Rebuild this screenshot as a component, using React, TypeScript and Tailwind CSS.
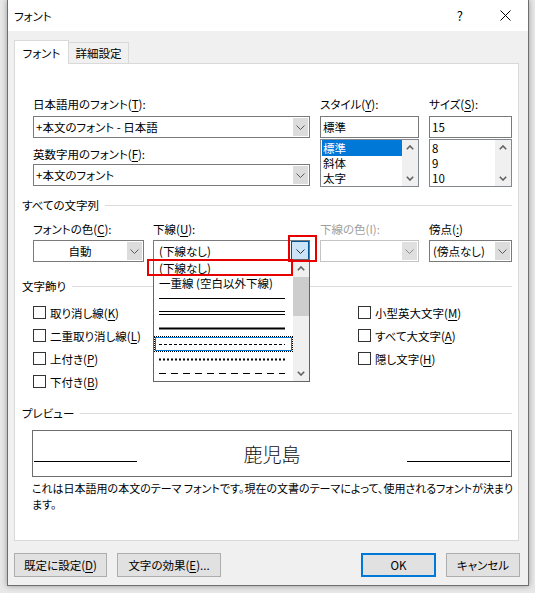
import React from "react";

function Chev({ color = "#5a5a5a" }: { color?: string }) {
  return (
    <svg width="9" height="5" viewBox="0 0 9 5">
      <path d="M0.5 0.5 L4.5 4.5 L8.5 0.5" fill="none" stroke={color} strokeWidth="1" />
    </svg>
  );
}

function Up() {
  return (
    <svg width="8" height="5" viewBox="0 0 8 5">
      <path d="M0.8 4.2 L4 1 L7.2 4.2" fill="none" stroke="#606060" strokeWidth="1.6" />
    </svg>
  );
}
function Down() {
  return (
    <svg width="8" height="5" viewBox="0 0 8 5">
      <path d="M0.8 0.8 L4 4 L7.2 0.8" fill="none" stroke="#606060" strokeWidth="1.6" />
    </svg>
  );
}

function U({ c }: { c: string }) {
  return <span className="underline underline-offset-[2px]">{c}</span>;
}

function Check({ children }: { children: React.ReactNode }) {
  return (
    <div className="flex items-center h-[23px]">
      <div className="w-[13px] h-[13px] border border-[#333333] bg-white" />
      <span className="ml-[4px] leading-[16px]">{children}</span>
    </div>
  );
}

function Section({ label }: { label: string }) {
  return (
    <div className="flex items-center h-[16px]">
      <span className="leading-[16px]">{label}</span>
      <div className="flex-1 h-px bg-[#dcdcdc] ml-[6px]" />
    </div>
  );
}

export default function App() {
  return (
    <div className="w-[535px] h-[593px] overflow-hidden bg-[#e8e8e8] font-['Noto_Sans_CJK_JP','Noto_Sans',sans-serif] text-[11.5px] text-black [font-feature-settings:'palt']">
      <div className="ml-[7px] w-[522px] h-[586px] bg-[#f0f0f0] border-x border-b border-[#6e6e6e] shadow-[0_0_6px_rgba(0,0,0,0.35)] flex flex-col">
        {/* title bar */}
        <div className="h-[31px] bg-white flex items-center shrink-0">
          <span className="ml-[6px] leading-[16px]">フォント</span>
          <span className="ml-auto leading-[16px] text-[13px]">?</span>
          <svg className="ml-[37px] mr-[17px]" width="11" height="11" viewBox="0 0 11 11">
            <path d="M0.5 0.5 L10.5 10.5 M10.5 0.5 L0.5 10.5" stroke="#000" strokeWidth="1" />
          </svg>
        </div>
        {/* tabs */}
        <div className="h-[32px] flex items-end pl-[6px] shrink-0">
          <div className="relative z-10 -mb-px h-[24px] w-[55px] bg-white border-x border-t border-[#d9d9d9] flex items-center justify-center leading-[16px]">
            フォント
          </div>
          <div className="h-[21px] w-[60px] border-r border-t border-[#d9d9d9] flex items-center justify-center leading-[16px]">
            詳細設定
          </div>
        </div>
        {/* panel */}
        <div className="ml-[6px] w-[505px] h-[478px] bg-white border border-[#d9d9d9] shrink-0 pl-[7px] pr-[6px] pt-[32px]">
          {/* row 1 */}
          <div className="flex ml-[11px]">
            <div className="w-[277px]">
              <div className="h-[16px] leading-[16px]">日本語用のフォント(<U c="T" />):</div>
              <div className="mt-[4px] h-[22px] border border-[#7a7a7a] flex">
                <div className="flex-1 pl-[2px] leading-[20px]">+本文のフォント - 日本語</div>
                <div className="w-[15px] m-px bg-[#dcdcdc] flex items-center justify-center"><Chev /></div>
              </div>
              <div className="mt-[8px] h-[16px] leading-[16px]">英数字用のフォント(<U c="F" />):</div>
              <div className="mt-[2px] h-[22px] border border-[#7a7a7a] flex">
                <div className="flex-1 pl-[2px] leading-[20px]">+本文のフォント</div>
                <div className="w-[15px] m-px bg-[#dcdcdc] flex items-center justify-center"><Chev /></div>
              </div>
            </div>
            <div className="w-[99px] ml-[10px]">
              <div className="h-[16px] leading-[16px]">スタイル(<U c="Y" />):</div>
              <div className="mt-[4px] h-[22px] border border-[#7a7a7a] pl-[2px] leading-[20px]">標準</div>
              <div className="mt-px h-[48px] border border-[#828790] flex">
                <div className="flex-1 pl-px">
                  <div className="h-[16px] leading-[16px] bg-[#0078d7] text-white pl-px">標準</div>
                  <div className="h-[15px] leading-[15px] pl-px">斜体</div>
                  <div className="h-[15px] leading-[15px] pl-px">太字</div>
                </div>
                <div className="w-[16px] bg-[#f0f0f0] flex flex-col items-center justify-between py-[5px]">
                  <Up />
                  <Down />
                </div>
              </div>
            </div>
            <div className="w-[83px] ml-[10px]">
              <div className="h-[16px] leading-[16px]">サイズ(<U c="S" />):</div>
              <div className="mt-[4px] h-[22px] border border-[#7a7a7a] pl-[2px] leading-[20px]">15</div>
              <div className="mt-px h-[48px] border border-[#828790] flex">
                <div className="flex-1 pl-px">
                  <div className="h-[16px] leading-[16px] pl-px">8</div>
                  <div className="h-[15px] leading-[15px] pl-px">9</div>
                  <div className="h-[15px] leading-[15px] pl-px">10</div>
                </div>
                <div className="w-[16px] bg-[#f0f0f0] flex flex-col items-center justify-between py-[5px]">
                  <Up />
                  <Down />
                </div>
              </div>
            </div>
          </div>

          {/* section all text */}
          <div className="mt-[10px]">
            <Section label="すべての文字列" />
          </div>
          <div className="flex ml-[11px] mt-[8px]">
            <div className="w-[111px]">
              <div className="h-[16px] leading-[16px]">フォントの色(<U c="C" />):</div>
              <div className="mt-[3px] h-[22px] border border-[#7a7a7a] flex">
                <div className="flex-1 text-center leading-[20px]">自動</div>
                <div className="w-[15px] m-px bg-[#dcdcdc] flex items-center justify-center"><Chev /></div>
              </div>
            </div>
            <div className="w-[157px] ml-[9px]">
              <div className="h-[16px] leading-[16px]">下線(<U c="U" />):</div>
              <div className="relative mt-[3px] h-[22px] border border-[#7a7a7a] flex">
                <div className="flex-1 pl-[5px] leading-[20px]">(下線なし)</div>
                <div className="w-[18px] bg-[#cce4f7] border border-[#005499] flex items-center justify-center"><Chev color="#333333" /></div>
                {/* dropdown list */}
                <div className="absolute z-20 left-[-1px] top-[18px] w-[157px] h-[123px] bg-white border border-[#646464] flex">
                  <div className="flex-1 flex flex-col">
                    <div className="h-[16px] leading-[16px] pl-[5px]">(下線なし)</div>
                    <div className="h-[15px] leading-[15px] pl-[5px]">一重線 (空白以外下線)</div>
                    <div className="h-[15px] flex items-center pl-[5px]">
                      <svg width="126" height="3"><line x1="0" y1="1.5" x2="126" y2="1.5" stroke="#000" strokeWidth="1" /></svg>
                    </div>
                    <div className="h-[15px] flex items-center pl-[5px]">
                      <svg width="126" height="5"><line x1="0" y1="0.5" x2="126" y2="0.5" stroke="#000" strokeWidth="1" /><line x1="0" y1="3.5" x2="126" y2="3.5" stroke="#000" strokeWidth="1" /></svg>
                    </div>
                    <div className="h-[15px] flex items-center pl-[5px]">
                      <svg width="126" height="3"><line x1="0" y1="1.5" x2="126" y2="1.5" stroke="#000" strokeWidth="2.2" /></svg>
                    </div>
                    <div className="h-[16px] border border-dotted border-black">
                      <div className="h-full border border-[#0078d7] flex items-center pl-[3px]">
                        <svg width="126" height="3"><line x1="0" y1="1.5" x2="126" y2="1.5" stroke="#000" strokeWidth="1" strokeDasharray="3 2" /></svg>
                      </div>
                    </div>
                    <div className="h-[14px] flex items-center pl-[5px]">
                      <svg width="126" height="3"><line x1="0" y1="1.5" x2="126" y2="1.5" stroke="#000" strokeWidth="2" strokeDasharray="2 2" /></svg>
                    </div>
                    <div className="h-[15px] flex items-center pl-[5px]">
                      <svg width="126" height="3"><line x1="0" y1="1.5" x2="126" y2="1.5" stroke="#000" strokeWidth="1" strokeDasharray="7 5" /></svg>
                    </div>
                  </div>
                  <div className="w-[16px] bg-[#f0f0f0] flex flex-col items-center">
                    <div className="h-[17px] flex items-center justify-center"><Up /></div>
                    <div className="w-full h-[39px] bg-[#cdcdcd]" />
                    <div className="flex-1 flex items-end pb-[5px]"><Down /></div>
                  </div>
                </div>
                {/* red annotation boxes */}
                <div className="absolute z-30 left-[134px] top-[-6px] w-[29px] h-[27px] border-2 border-[#e60000]" />
                <div className="absolute z-30 left-[-7px] top-[18px] w-[146px] h-[17px] border-2 border-[#e60000]" />
              </div>
            </div>
            <div className="w-[99px] ml-[10px]">
              <div className="h-[16px] leading-[16px] text-[#a0a0a0]">下線の色(I):</div>
              <div className="mt-[3px] h-[22px] border border-[#c4c4c4] flex">
                <div className="flex-1" />
                <div className="w-[15px] m-px bg-[#e0e0e0] flex items-center justify-center"><Chev color="#8a8a8a" /></div>
              </div>
            </div>
            <div className="w-[83px] ml-[10px]">
              <div className="h-[16px] leading-[16px]">傍点(<U c=":" />)</div>
              <div className="mt-[3px] h-[22px] border border-[#7a7a7a] flex">
                <div className="flex-1 pl-[3px] leading-[20px]">(傍点なし)</div>
                <div className="w-[15px] m-px bg-[#dcdcdc] flex items-center justify-center"><Chev /></div>
              </div>
            </div>
          </div>

          {/* decorations */}
          <div className="mt-[16px]">
            <Section label="文字飾り" />
          </div>
          <div className="flex ml-[11px] mt-[7px]">
            <div className="w-[325px]">
              <Check>取り消し線(<U c="K" />)</Check>
              <Check>二重取り消し線(<U c="L" />)</Check>
              <Check>上付き(<U c="P" />)</Check>
              <Check>下付き(<U c="B" />)</Check>
            </div>
            <div>
              <Check>小型英大文字(<U c="M" />)</Check>
              <Check>すべて大文字(<U c="A" />)</Check>
              <Check>隠し文字(<U c="H" />)</Check>
            </div>
          </div>

          {/* preview */}
          <div className="mt-[12px]">
            <Section label="プレビュー" />
          </div>
          <div className="ml-[10px] mt-[9px] h-[47px] border border-[#6d6d6d] flex px-px">
            <div className="w-[103px] h-px bg-black self-end mb-[14px]" />
            <div className="flex-1 flex items-center justify-center text-[19px] leading-[24px] font-light text-[#111111]">鹿児島</div>
            <div className="w-[103px] h-px bg-black self-end mb-[14px]" />
          </div>
          <div className="ml-[10px] mt-[3px] leading-[16px] text-[11px]">
            <div className="whitespace-nowrap">これは日本語用の本文のテーマ フォントです。現在の文書のテーマによって、使用されるフォントが決まり</div>
            <div className="whitespace-nowrap">ます。</div>
          </div>
        </div>

        {/* buttons */}
        <div className="flex mt-[12px] h-[24px] shrink-0">
          <div className="ml-[6px] w-[93px] h-[24px] bg-[#e1e1e1] border border-[#adadad] flex items-center justify-center leading-[16px]">既定に設定(<U c="D" />)</div>
          <div className="ml-[10px] w-[104px] h-[24px] bg-[#e1e1e1] border border-[#adadad] flex items-center justify-center leading-[16px]">文字の効果(<U c="E" />)...</div>
          <div className="ml-auto w-[75px] h-[24px] bg-[#e1e1e1] border-2 border-[#0078d7] flex items-center justify-center leading-[16px]">OK</div>
          <div className="ml-[10px] mr-[8px] w-[74px] h-[24px] bg-[#e1e1e1] border border-[#adadad] flex items-center justify-center leading-[16px]">キャンセル</div>
        </div>
      </div>
    </div>
  );
}
